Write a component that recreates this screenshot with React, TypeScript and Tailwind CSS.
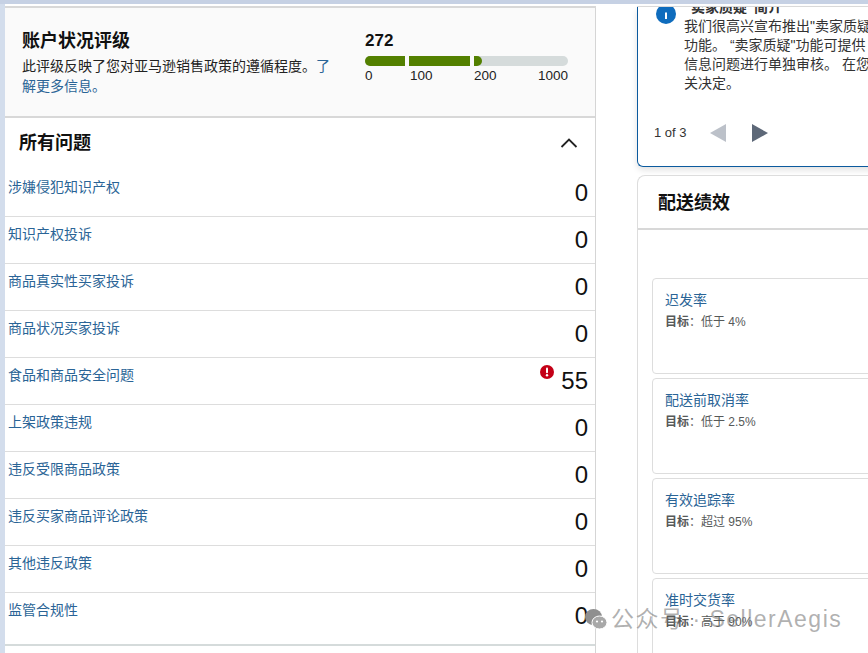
const FONT = "font-['Liberation_Sans','Noto_Sans_CJK_SC',sans-serif]";

const ISSUES: { label: string; count: number; alert?: boolean }[] = [
  { label: '涉嫌侵犯知识产权', count: 0 },
  { label: '知识产权投诉', count: 0 },
  { label: '商品真实性买家投诉', count: 0 },
  { label: '商品状况买家投诉', count: 0 },
  { label: '食品和商品安全问题', count: 55, alert: true },
  { label: '上架政策违规', count: 0 },
  { label: '违反受限商品政策', count: 0 },
  { label: '违反买家商品评论政策', count: 0 },
  { label: '其他违反政策', count: 0 },
  { label: '监管合规性', count: 0 },
];

const METRICS = [
  { label: '迟发率', target: '低于 4%' },
  { label: '配送前取消率', target: '低于 2.5%' },
  { label: '有效追踪率', target: '超过 95%' },
  { label: '准时交货率', target: '高于 90%' },
];

function IssueRow({ label, count, alert }: { label: string; count: number; alert?: boolean }) {
  return (
    <div className="flex h-[47px] items-start justify-between border-b border-[#dddddd] pl-[3px] pr-[7px] last:border-b-0">
      <a className="mt-[8px] text-[14px] leading-[18px] text-[#2a6496]">{label}</a>
      <div className="flex items-start">
        {alert && (
          <svg className="mt-[7px] mr-[7px] h-[14px] w-[14px]" viewBox="0 0 14 14">
            <circle cx="7" cy="7" r="7" fill="#c40017" />
            <rect x="6" y="2.6" width="2" height="5.6" rx="1" fill="#fff" />
            <circle cx="7" cy="10.3" r="1.2" fill="#fff" />
          </svg>
        )}
        <span className="mt-[9px] text-[24px] leading-[28px] text-[#111111]">{count}</span>
      </div>
    </div>
  );
}

function HealthBar() {
  return (
    <div className="flex h-[10px] w-[203px] overflow-hidden rounded-[5px] bg-[#d5dbdb]">
      <div className="h-full w-[40px] bg-[#538000]" />
      <div className="h-full w-[4px] bg-[#fafafa]" />
      <div className="h-full w-[61px] bg-[#538000]" />
      <div className="h-full w-[4px] bg-[#fafafa]" />
      <div className="h-full w-[8px] rounded-r-[5px] bg-[#538000]" />
    </div>
  );
}

function MetricCard({ label, target }: { label: string; target: string }) {
  return (
    <div className="h-[96px] rounded-[4px] border border-[#dddddd] bg-white pl-[12px] pt-[12px]">
      <div className="text-[14px] leading-[18px] text-[#2a6496]">{label}</div>
      <div className="mt-[4px] text-[12px] leading-[18px] text-[#565959]">
        <span className="font-bold">目标</span>：{target}
      </div>
    </div>
  );
}

function WeChatMark() {
  return (
    <svg className="h-[22px] w-[22px]" viewBox="0 0 22 22">
      <ellipse cx="8.5" cy="9" rx="8.5" ry="8" fill="#8f8f8f" />
      <ellipse cx="14.5" cy="14.5" rx="7.5" ry="6.5" fill="#a8a8a8" stroke="#fff" strokeWidth="1" />
      <circle cx="12" cy="13.5" r="1.1" fill="#fff" />
      <circle cx="17" cy="13.5" r="1.1" fill="#fff" />
    </svg>
  );
}

export default function App() {
  return (
    <div className={`${FONT} relative h-[653px] w-[868px] overflow-hidden bg-white`}>
      <div className="h-[4px] bg-[#c6d1e4]" />
      <div className="flex h-[649px]">
        <div className="w-[5px] shrink-0 bg-[#d3ddec]" />

        {/* Left column */}
        <div className="w-[591px] shrink-0 pt-[2px]">
          <div className="h-[2px] bg-[#d8d8d8]" />
          <div className="border-r border-[#d5d5d5]">
            <div className="flex h-[108px] bg-[#fafafa] pl-[17px]">
              <div className="w-[343px] shrink-0 pt-[19px]">
                <h2 className="text-[18px] font-bold leading-[28px] text-[#111111]">账户状况评级</h2>
                <p className="mt-[1px] w-[318px] text-[14px] leading-[20px] text-[#222222]">
                  此评级反映了您对亚马逊销售政策的遵循程度。<a className="text-[#2a6496]">了解更多信息。</a>
                </p>
              </div>
              <div className="w-[203px] pt-[22px]">
                <div className="text-[17px] font-bold leading-[22px] text-[#111111]">272</div>
                <div className="mt-[4px]">
                  <HealthBar />
                </div>
                <div className="mt-[2px] flex w-[203px] text-[13.5px] leading-[16px] text-[#222222]">
                  <span className="w-[45px]">0</span>
                  <span className="w-[64px]">100</span>
                  <span>200</span>
                  <span className="ml-auto">1000</span>
                </div>
              </div>
            </div>
            <div className="h-[2px] bg-[#d8d8d8]" />
            <div className="flex h-[52px] items-center justify-between pb-[3px] pl-[14px] pr-[17px]">
              <h3 className="text-[18px] font-bold leading-[28px] text-[#111111]">所有问题</h3>
              <svg className="h-[12px] w-[18px]" viewBox="0 0 18 12" fill="none">
                <path d="M1.5 10 9 2.5 16.5 10" stroke="#222222" strokeWidth="1.8" />
              </svg>
            </div>
            <div>
              {ISSUES.map((issue) => (
                <IssueRow key={issue.label} {...issue} />
              ))}
            </div>
            <div className="h-[6px] border-b-2 border-[#d5dbdb]" />
            <div className="h-[20px]" />
          </div>
        </div>

        {/* Right column */}
        <div className="ml-[41px] w-[300px] shrink-0 pt-[2px]">
          <div className="h-px bg-[#dddddd]" />
          <div className="h-[160px] overflow-hidden rounded-bl-[6px] border-b border-l border-[#0b5a9e] shadow-[0_3px_6px_rgba(0,0,0,0.12)]">
            <div className="-mt-[9px] flex pl-[18px]">
              <svg className="mt-[6px] h-[20px] w-[20px] shrink-0" viewBox="0 0 20 20">
                <circle cx="10" cy="10" r="10" fill="#0f6cbd" />
                <rect x="9" y="8.5" width="2" height="6.5" fill="#fff" />
              </svg>
              <div className="ml-[8px] whitespace-nowrap text-[14px] leading-[19px] text-[#333333]">
                <div className="font-bold">“卖家质疑”简介</div>
                <div>我们很高兴宣布推出"卖家质疑"</div>
                <div>功能。 “卖家质疑"功能可提供</div>
                <div>信息问题进行单独审核。 在您</div>
                <div>关决定。</div>
              </div>
            </div>
            <div className="mt-[31px] flex items-center pl-[16px]">
              <span className="text-[13px] leading-[18px] text-[#333333]">1 of 3</span>
              <svg className="ml-[23px] h-[18px] w-[16px]" viewBox="0 0 16 18">
                <path d="M16 0v18L0 9z" fill="#bcc1c9" />
              </svg>
              <svg className="ml-[26px] h-[18px] w-[16px]" viewBox="0 0 16 18">
                <path d="M0 0v18L16 9z" fill="#5d6878" />
              </svg>
            </div>
          </div>
          <div className="mt-[8px] rounded-tl-[8px] border-l border-t border-[#dddddd]">
            <div className="flex h-[54px] items-center border-b-2 border-[#d8d8d8] pl-[20px] pt-[1px]">
              <h3 className="text-[18px] font-bold leading-[28px] text-[#111111]">配送绩效</h3>
            </div>
            <div className="flex flex-col gap-[4px] pl-[14px] pt-[48px]">
              {METRICS.map((m) => (
                <MetricCard key={m.label} {...m} />
              ))}
            </div>
          </div>
        </div>
      </div>

      {/* watermark */}
      <div className="absolute left-[585px] top-[605px] flex items-center gap-[4px] text-[23px] leading-[28px] tracking-[1.5px] text-[rgba(110,110,110,0.55)]">
        <WeChatMark />
        <span>公众号 · SellerAegis</span>
      </div>
    </div>
  );
}
